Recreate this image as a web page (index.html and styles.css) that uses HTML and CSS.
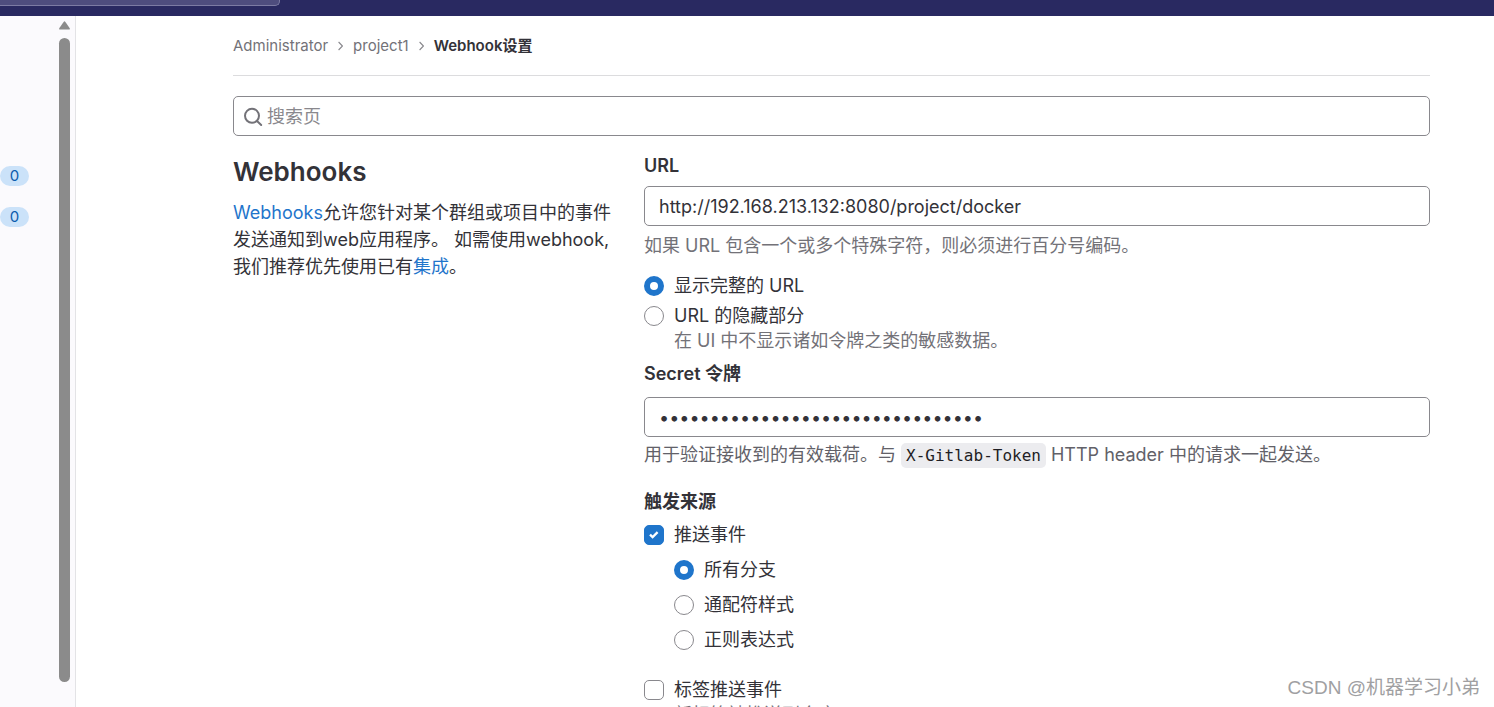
FILE: index.html
```html
<!DOCTYPE html>
<html lang="zh-CN">
<head>
<meta charset="utf-8">
<title>Webhook设置</title>
<link rel="stylesheet" href="styles.css">
</head>
<body>
<header class="topbar"><button class="topbar-search" type="button" aria-label="搜索"></button></header>
<div class="layout">
  <aside class="sidebar">
    <div class="counts">
      <span class="badge">0</span>
      <span class="badge">0</span>
    </div>
    <div class="scrollbar">
      <svg class="scroll-arrow" viewBox="0 0 11 9" aria-hidden="true"><path d="M4.6.9 Q5.5-.2 6.4.9 L10.6 7 Q11.4 8.6 9.8 8.6 H1.2 Q-.4 8.6.4 7Z"/></svg>
      <div class="scroll-thumb"></div>
    </div>
  </aside>
  <main class="content">
    <nav class="breadcrumb" aria-label="面包屑">
      <a href="#">Administrator</a>
      <svg class="chevron" viewBox="0 0 5 10" aria-hidden="true"><path d="M.6 1l3.8 4-3.8 4"/></svg>
      <a href="#">project1</a>
      <svg class="chevron" viewBox="0 0 5 10" aria-hidden="true"><path d="M.6 1l3.8 4-3.8 4"/></svg>
      <a class="current" href="#">Webhook设置</a>
    </nav>
    <label class="search">
      <svg class="search-icon" viewBox="0 0 20 20" aria-hidden="true"><circle cx="9" cy="8.8" r="7"/><path d="M14 14l4.2 4"/></svg>
      <input type="search" placeholder="搜索页" aria-label="搜索页">
    </label>
    <div class="settings">
      <section class="intro">
        <h1>Webhooks</h1>
        <p><a href="#">Webhooks</a>允许您针对某个群组或项目中的事件发送通知到web应用程序。 如需使用webhook,我们推荐优先使用已有<a href="#">集成</a>。</p>
      </section>
      <form class="form">
        <label class="title" for="url">URL</label>
        <input class="field" id="url" type="text" value="http://192.168.213.132:8080/project/docker">
        <p class="help">如果 URL 包含一个或多个特殊字符，则必须进行百分号编码。</p>
        <div class="url-options">
          <label class="choice"><input type="radio" name="mask" checked><span>显示完整的 URL</span></label>
          <label class="choice"><input type="radio" name="mask"><span>URL 的隐藏部分</span></label>
          <p class="help choice-help">在 UI 中不显示诸如令牌之类的敏感数据。</p>
        </div>
        <label class="title" for="token">Secret 令牌</label>
        <input class="field token-field" id="token" type="password" value="abcdefghijklmnopqrstuvwxyz123456">
        <p class="help token-help">用于验证接收到的有效载荷。与 <code>X-Gitlab-Token</code> HTTP header 中的请求一起发送。</p>
        <fieldset class="triggers">
          <legend class="title">触发来源</legend>
          <label class="choice"><input type="checkbox" checked><span>推送事件</span></label>
          <div class="branches">
            <label class="choice"><input type="radio" name="branch" checked><span>所有分支</span></label>
            <label class="choice"><input type="radio" name="branch"><span>通配符样式</span></label>
            <label class="choice"><input type="radio" name="branch"><span>正则表达式</span></label>
          </div>
          <label class="choice"><input type="checkbox"><span>标签推送事件</span></label>
          <p class="help choice-help">新标签被推送到仓库</p>
        </fieldset>
      </form>
    </div>
  </main>
</div>
<div class="watermark">CSDN @机器学习小弟</div>
</body>
</html>
```

FILE: styles.css
```css
* { box-sizing: border-box; }
body {
  margin: 0;
  height: 100vh;
  overflow: hidden;
  display: flex;
  flex-direction: column;
  background: #fff;
  color: #333238;
  font: 18px/26px Inter, "Noto Sans CJK SC", sans-serif;
}
a { color: #1f75cb; text-decoration: none; }
p, h1 { margin: 0; }

.topbar { flex: none; height: 16px; background: #292961; }
.topbar-search {
  display: block;
  width: 280px;
  height: 6px;
  padding: 0;
  border: 1px solid #7c7ba3;
  border-width: 0 1px 1px 0;
  border-radius: 0 0 5px 0;
  background: #4e4d7e;
}

.layout { flex: 1; min-height: 0; display: flex; }
.sidebar {
  flex: none;
  width: 76px;
  display: flex;
  justify-content: space-between;
  padding: 5px 5px 25px 0;
  border-right: 1px solid #e3e3e6;
  background: #fbfafd;
}
.counts { display: flex; flex-direction: column; gap: 21px; padding-top: 145px; }
.badge {
  width: 29px;
  height: 20px;
  border-radius: 10px;
  background: #cbe2f9;
  color: #0b5cad;
  font-size: 15px;
  line-height: 20px;
  text-align: center;
}
.scrollbar { width: 11px; display: flex; flex-direction: column; gap: 8px; }
.scroll-arrow { flex: none; width: 11px; height: 9px; fill: #8b8b8b; }
.scroll-thumb { flex: 1; border-radius: 6px; background: #8b8b8b; }

.content { flex: 1; min-width: 0; padding: 0 64px 0 157px; }
.breadcrumb {
  display: flex;
  align-items: center;
  gap: 10px;
  height: 60px;
  border-bottom: 1px solid #dcdcde;
  font-size: 15px;
}
.breadcrumb a { color: #737278; }
.breadcrumb .current { color: #333238; font-weight: 600; }
.chevron { width: 5px; height: 10px; fill: none; stroke: #89888d; stroke-width: 1.1; }

.search {
  display: flex;
  align-items: center;
  gap: 4px;
  height: 40px;
  margin-top: 20px;
  padding: 1px 9px 0;
  border: 1px solid #89888d;
  border-radius: 5px;
}
.search-icon { flex: none; width: 20px; height: 20px; fill: none; stroke: #737278; stroke-width: 2; stroke-linecap: round; }
.search input { flex: 1; border: 0; padding: 0; outline: 0; background: none; color: inherit; font: inherit; }
.search input::placeholder { color: #89888d; opacity: 1; }

.settings { display: grid; grid-template-columns: 380px 1fr; column-gap: 31px; padding-top: 17px; }
h1 { margin: 3px 0 11px; font-size: 26px; line-height: 32px; font-weight: 600; }
.intro p { line-height: 27px; }
.form { display: flex; flex-direction: column; }
.title { padding: 0; font-weight: 600; line-height: 26px; }
.field {
  width: 100%;
  height: 40px;
  margin: 7px 0;
  padding: 0 14px;
  border: 1px solid #89888d;
  border-radius: 5px;
  background: #fff;
  color: #333238;
  font: inherit;
}
.token-field { margin: 10px 0 5px; }
.help { color: #737278; }
.url-options { padding: 14px 0 8px; }
.choice { display: flex; align-items: center; gap: 10px; }
.choice + .choice { margin-top: 4px; }
.choice-help { padding-left: 30px; line-height: 24px; }
input[type="radio"], input[type="checkbox"] {
  appearance: none;
  flex: none;
  width: 20px;
  height: 20px;
  margin: 0;
  border: 1px solid #89888d;
  border-radius: 50%;
  background: #fff center / 100% no-repeat;
}
input[type="checkbox"] { border-radius: 5px; }
input[type="radio"]:checked { border: 6px solid #1f75cb; }
input[type="checkbox"]:checked {
  border-color: #1f75cb;
  background-color: #1f75cb;
  background-image: url("data:image/svg+xml,%3Csvg xmlns='http://www.w3.org/2000/svg' viewBox='0 0 18 18'%3E%3Cpath d='M5 8.6l2.6 2.5 5-5' fill='none' stroke='white' stroke-width='2.3'/%3E%3C/svg%3E");
}
.token-help { color: #626168; }
code {
  padding: 3px 5px;
  border-radius: 5px;
  background: #ececef;
  color: #1f1e24;
  font: 16px "DejaVu Sans Mono", monospace;
}
.triggers { min-width: 0; margin: 21px 0 0; padding: 0; border: 0; }
.triggers .title { margin-bottom: 7px; }
.branches { display: flex; flex-direction: column; gap: 9px; padding: 9px 0 24px 30px; }
.branches .choice { margin: 0; }
.watermark {
  position: absolute;
  right: 14px;
  bottom: 5px;
  color: #a0a0a2;
  font: 19px/28px "Liberation Sans", "Noto Sans CJK SC", sans-serif;
}
```
